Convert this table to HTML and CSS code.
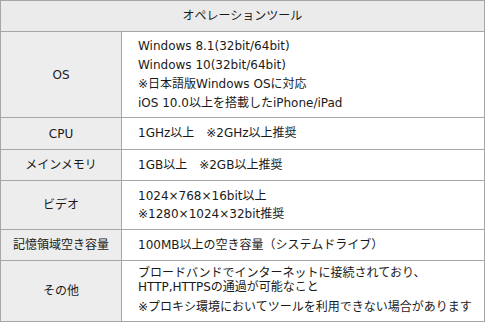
FILE: index.html
```html
<!DOCTYPE html>
<html lang="ja">
<head>
    <meta charset="UTF-8">
    <meta name="viewport" content="width=device-width, initial-scale=1.0">
    <title>動作環境 - オペレーションツール</title>
    <link rel="stylesheet" href="styles.css">
</head>
<body>
    <table class="spec-table">
        <colgroup>
            <col class="col-label">
            <col class="col-value">
        </colgroup>
        <thead>
            <tr>
                <th colspan="2" class="spec-title">オペレーションツール</th>
            </tr>
        </thead>
        <tbody>
            <tr class="row-os">
                <th>OS</th>
                <td>
                    <p>Windows 8.1(32bit/64bit)</p>
                    <p>Windows 10(32bit/64bit)</p>
                    <p>※日本語版Windows OSに対応</p>
                    <p>iOS 10.0以上を搭載したiPhone/iPad</p>
                </td>
            </tr>
            <tr class="row-cpu">
                <th>CPU</th>
                <td>1GHz以上　※2GHz以上推奨</td>
            </tr>
            <tr class="row-single">
                <th>メインメモリ</th>
                <td>1GB以上　※2GB以上推奨</td>
            </tr>
            <tr class="row-video">
                <th>ビデオ</th>
                <td>
                    <p>1024×768×16bit以上</p>
                    <p>※1280×1024×32bit推奨</p>
                </td>
            </tr>
            <tr class="row-single">
                <th>記憶領域空き容量</th>
                <td>100MB以上の空き容量（システムドライブ）</td>
            </tr>
            <tr class="row-other">
                <th>その他</th>
                <td>
                    <p class="tight">ブロードバンドでインターネットに接続されており、<br>HTTP,HTTPSの通過が可能なこと</p>
                    <p>※プロキシ環境においてツールを利用できない場合があります</p>
                </td>
            </tr>
        </tbody>
    </table>
</body>
</html>
```

FILE: styles.css
```css
:root {
    --border: #a6a6a6;
    --head-bg: #ebebeb;
    --label-bg: #ededed;
    --text: #1a1a1a;
}
body {
    margin: 0;
    padding: 0;
    background: #ffffff;
    color: var(--text);
    font-family: "DejaVu Sans", "Noto Sans CJK JP", sans-serif;
    font-size: 12px;
}
.spec-table {
    width: 485px;
    border-collapse: collapse;
    table-layout: fixed;
}
.col-label {
    width: 121px;
}
.spec-table th,
.spec-table td {
    border: 1px solid var(--border);
    vertical-align: middle;
    line-height: 19px;
    padding: 6px 4px 5px 16px;
}
.spec-table th {
    background: var(--label-bg);
    font-weight: normal;
    text-align: center;
    padding-left: 0;
    padding-right: 0;
}
.spec-table .spec-title {
    background: var(--head-bg);
    line-height: 18px;
    padding: 6px 0;
}
.spec-table td {
    text-align: left;
    white-space: nowrap;
}
.spec-table p {
    margin: 0;
}
.row-os td {
    padding-top: 5px;
    padding-bottom: 4px;
}
.row-cpu td {
    padding-top: 6px;
    padding-bottom: 6px;
}
.row-video td {
    line-height: 18px;
    padding-top: 6px;
    padding-bottom: 6px;
}
.row-other td {
    padding-top: 5px;
    padding-bottom: 4px;
}
.row-other p.tight {
    line-height: 14px;
    margin-bottom: 4px;
}
```
